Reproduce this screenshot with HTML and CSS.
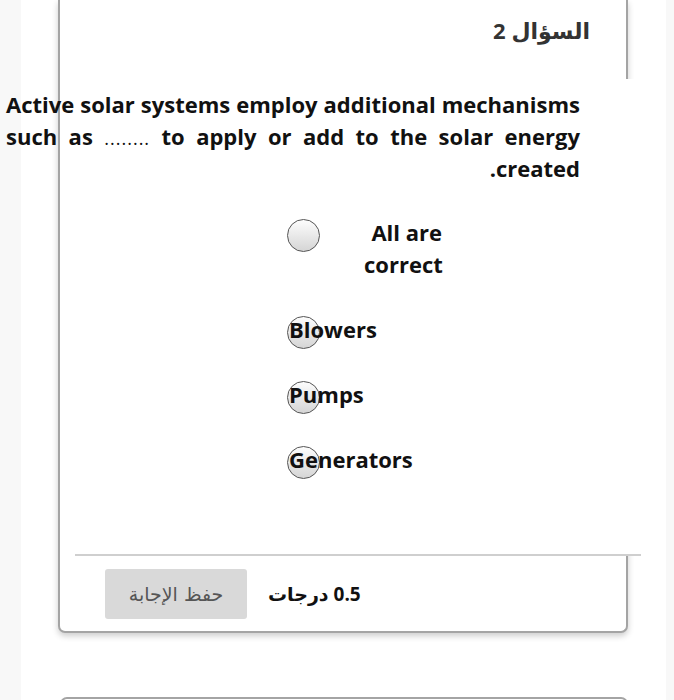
FILE: index.html
```html
<!DOCTYPE html>
<html lang="ar">
<head>
<meta charset="utf-8">
<link rel="stylesheet" href="styles.css">
</head>
<body>
<div class="column">
  <div class="card">
    <div class="head"><span class="qnum" dir="rtl">السؤال 2</span></div>
    <div class="body">
      <p class="question" dir="rtl">Active solar systems employ additional mechanisms such as <span class="dots">........</span> to apply or add to the solar energy created.</p>
      <div class="options">
        <label class="option">
          <span class="radio"></span>
          <span class="label label-wide">All are correct</span>
        </label>
        <label class="option">
          <span class="radio"></span>
          <span class="label">Blowers</span>
        </label>
        <label class="option">
          <span class="radio"></span>
          <span class="label">Pumps</span>
        </label>
        <label class="option">
          <span class="radio"></span>
          <span class="label">Generators</span>
        </label>
      </div>
      <div class="divider"></div>
    </div>
    <div class="foot">
      <button class="save" dir="rtl">حفظ الإجابة</button>
      <span class="points" dir="rtl">0.5 درجات</span>
    </div>
  </div>
  <div class="card next"></div>
</div>
</body>
</html>
```

FILE: styles.css
```css
html, body {
  margin: 0;
  padding: 0;
}
body {
  background: #f8f8f8;
  font-family: "Open Sans", "Noto Sans", "DejaVu Sans", sans-serif;
  color: #111;
  overflow: hidden;
}
.column {
  margin-left: 21px;
  width: 645px;
  height: 700px;
  background: #ffffff;
}
.card {
  box-sizing: border-box;
  margin-left: 37px;
  width: 570px;
  border-left: 2px solid #a4a4a4;
  border-right: 2px solid #a4a4a4;
  border-bottom: 2px solid #a4a4a4;
  border-radius: 0 0 7px 7px;
  box-shadow: 0 3px 6px rgba(0, 0, 0, 0.2);
  background: #fff;
}
.head {
  height: 79px;
  box-sizing: border-box;
  padding-top: 15px;
  padding-right: 36px;
  text-align: right;
}
.qnum {
  font-size: 22px;
  font-weight: 700;
  line-height: 30px;
  color: #333;
}
.body {
  margin-right: -15px;
  background: #fff;
  padding-top: 9px;
}
.question {
  margin: 0 0 0 -54px;
  padding-right: 61px;
  text-align: justify;
  font-size: 22px;
  font-weight: 700;
  line-height: 32px;
  color: #111;
}
.dots {
  font-weight: 400;
  font-size: 18px;
  line-height: 1;
  letter-spacing: 1px;
}
.options {
  display: flex;
  flex-direction: column;
  gap: 33px;
  margin-top: 32px;
  padding-left: 228px;
}
.option {
  position: relative;
  display: flex;
  font-size: 22px;
  font-weight: 700;
  line-height: 32px;
  color: #111;
}
.radio {
  position: absolute;
  left: -1px;
  top: 3px;
  box-sizing: border-box;
  width: 33px;
  height: 33px;
  border-radius: 50%;
  border: 1.5px solid #555;
  background: linear-gradient(#fdfdfd, #d5d5d5);
}
.label {
  position: relative;
  margin-left: 1px;
}
.label-wide {
  margin-left: 76px;
  width: 78px;
  text-align: right;
}
.divider {
  margin-top: 79px;
  margin-left: 15px;
  border-bottom: 2px solid #cfcfcf;
}
.foot {
  display: flex;
  align-items: center;
  height: 75px;
  padding-left: 45px;
}
.save {
  width: 142px;
  height: 50px;
  border: none;
  border-radius: 3px;
  background: #d9d9d9;
  color: #555;
  font-family: "DejaVu Sans", sans-serif;
  font-size: 19px;
  font-weight: 400;
  padding: 0;
}
.points {
  margin-left: 21px;
  font-size: 19px;
  font-weight: 700;
  color: #111;
}
.card.next {
  margin-top: 64px;
  margin-left: 39px;
  width: 568px;
  height: 30px;
  border: 2px solid #a4a4a4;
  border-radius: 7px 7px 0 0;
  box-shadow: none;
}
```
